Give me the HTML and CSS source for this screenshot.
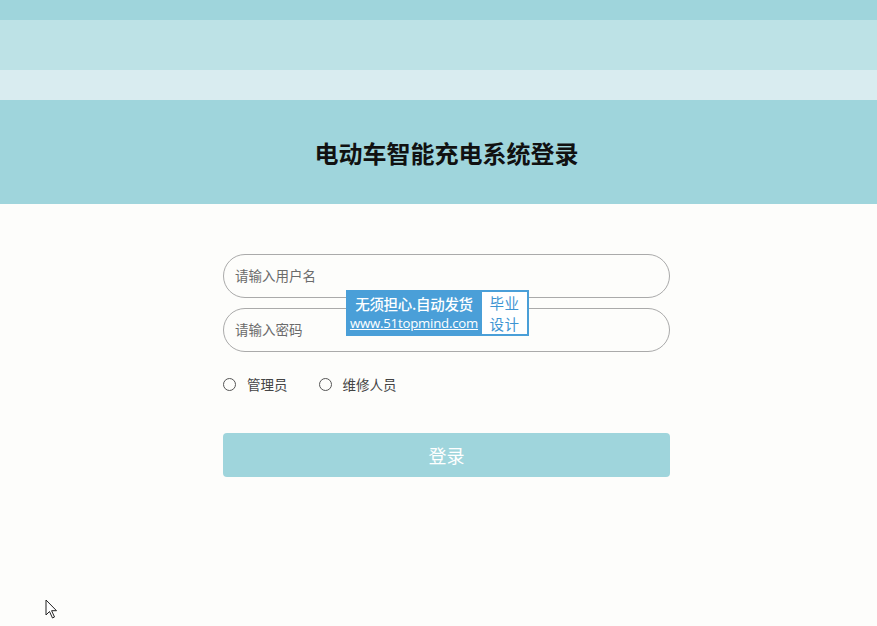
FILE: index.html
```html
<!DOCTYPE html>
<html lang="zh-CN">
<head>
<meta charset="utf-8">
<title>电动车智能充电系统登录</title>
<link rel="stylesheet" href="styles.css">
</head>
<body>
<div class="stripe s1"></div>
<div class="stripe s2"></div>
<div class="stripe s3"></div>
<header class="header">
  <h1 class="title">电动车智能充电系统登录</h1>
</header>
<main class="page">
  <form class="form">
    <div class="field"><input class="input" type="text" placeholder="请输入用户名"></div>
    <div class="field"><input class="input" type="password" placeholder="请输入密码"></div>
    <div class="roles">
      <label class="role"><span class="radio"></span>管理员</label>
      <label class="role"><span class="radio"></span>维修人员</label>
    </div>
    <button class="btn" type="button">登录</button>
  </form>
  <div class="watermark">
    <div class="wm-blue">
      <div class="wm-line1">无须担心.自动发货</div>
      <div class="wm-line2">www.51topmind.com</div>
    </div>
    <div class="wm-white"><span class="wm-w">毕业</span><span class="wm-w">设计</span></div>
  </div>
</main>
<svg class="cursor" width="14" height="20" viewBox="0 0 14 20"><path d="M1 1 L1 16 L4.5 12.5 L7.5 19 L9.5 18 L6.6 11.7 L11.5 11.7 Z" fill="#fff" stroke="#222" stroke-width="1"/></svg>
</body>
</html>
```
FILE: styles.css
```css
* { box-sizing: border-box; }
html, body { margin: 0; padding: 0; }
body {
  width: 877px;
  height: 626px;
  overflow: hidden;
  background: #fdfdfb;
  font-family: "Noto Sans CJK SC", "Noto Sans", sans-serif;
  position: relative;
}
.stripe { width: 100%; }
.s1 { height: 20px; background: #9fd5dc; }
.s2 { height: 50px; background: #bde2e6; }
.s3 { height: 30px; background: #d9ecf0; }
.header {
  height: 104px;
  background: #9fd5dc;
  display: flex;
  align-items: center;
  justify-content: center;
  padding-left: 16px;
}
.title {
  margin: 0;
  font-size: 24px;
  font-weight: 700;
  color: #111;
}
.page {
  padding-left: 16px;
  padding-top: 50px;
  display: flex;
  justify-content: center;
  position: relative;
}
.form { width: 447px; display: flex; flex-direction: column; }
.field { margin-bottom: 10px; }
.input {
  width: 100%;
  height: 44px;
  border: 1px solid #aaaaaa;
  border-radius: 22px;
  padding: 0 11px 2px;
  font-family: inherit;
  font-size: 13.5px;
  background: transparent;
  outline: none;
}
.input::placeholder { color: #6b6b6b; }
.roles { display: flex; align-items: center; margin-top: 10px; gap: 31px; height: 24px; }
.role { display: flex; align-items: center; font-size: 13.5px; color: #444; }
.radio {
  width: 13px; height: 13px; border: 1px solid #555; border-radius: 50%;
  margin-right: 11px; display: inline-block;
}
.btn {
  margin-top: 37px;
  height: 44px;
  border: none;
  border-radius: 4px;
  background: #9fd5dc;
  color: #fff;
  font-family: inherit;
  font-size: 18px;
  padding-bottom: 2px;
}
.watermark {
  position: absolute;
  left: 346px;
  top: 86px;
  display: flex;
  height: 46px;
  background: #4a9fd8;
  padding: 2px;
}
.wm-blue {
  width: 134px;
  color: #fff;
  display: flex; flex-direction: column; align-items: center; justify-content: center;
  padding-right: 2px;
}
.wm-line1 { font-size: 14.5px; font-weight: 500; line-height: 20px; letter-spacing: -0.3px; }
.wm-line2 { font-size: 13.2px; line-height: 18px; text-decoration: underline; font-family: "Open Sans", "Noto Sans", sans-serif; letter-spacing: -0.2px; }
.wm-white {
  width: 45px;
  background: #fff;
  color: #3d94d2;
  display: flex;
  flex-direction: column;
  align-items: center;
  justify-content: center;
}
.wm-w { font-size: 14.5px; line-height: 21px; display: block; letter-spacing: 0.5px; }
.cursor { position: absolute; left: 45px; top: 599px; }
```
